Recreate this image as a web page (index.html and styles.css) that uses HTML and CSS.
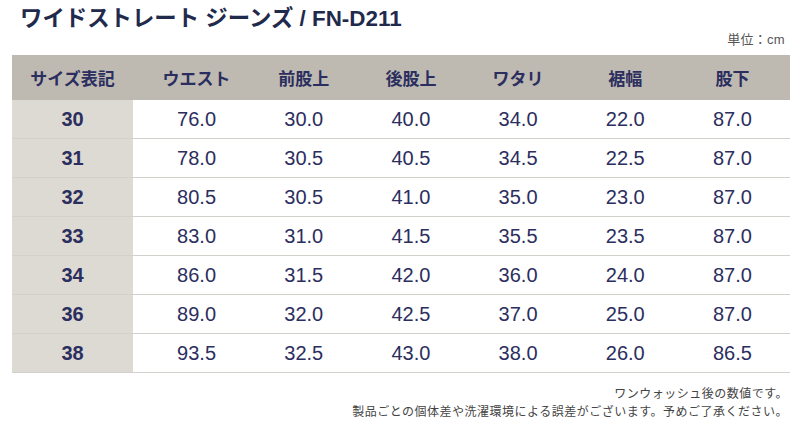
FILE: index.html
```html
<!DOCTYPE html>
<html lang="ja">
<head>
<meta charset="utf-8">
<title>ワイドストレート ジーンズ / FN-D211</title>
<link rel="stylesheet" href="styles.css">
</head>
<body>
<div class="page">
  <h1 class="title">ワイドストレート ジーンズ / FN-D211</h1>
  <div class="unit">単位：cm</div>
  <div class="table">
    <div class="row head">
      <div class="key">サイズ表記</div>
      <div>ウエスト</div><div>前股上</div><div>後股上</div><div>ワタリ</div><div>裾幅</div><div>股下</div>
    </div>
    <div class="row"><div class="key">30</div><div>76.0</div><div>30.0</div><div>40.0</div><div>34.0</div><div>22.0</div><div>87.0</div></div>
    <div class="row"><div class="key">31</div><div>78.0</div><div>30.5</div><div>40.5</div><div>34.5</div><div>22.5</div><div>87.0</div></div>
    <div class="row"><div class="key">32</div><div>80.5</div><div>30.5</div><div>41.0</div><div>35.0</div><div>23.0</div><div>87.0</div></div>
    <div class="row"><div class="key">33</div><div>83.0</div><div>31.0</div><div>41.5</div><div>35.5</div><div>23.5</div><div>87.0</div></div>
    <div class="row"><div class="key">34</div><div>86.0</div><div>31.5</div><div>42.0</div><div>36.0</div><div>24.0</div><div>87.0</div></div>
    <div class="row"><div class="key">36</div><div>89.0</div><div>32.0</div><div>42.5</div><div>37.0</div><div>25.0</div><div>87.0</div></div>
    <div class="row"><div class="key">38</div><div>93.5</div><div>32.5</div><div>43.0</div><div>38.0</div><div>26.0</div><div>86.5</div></div>
  </div>
  <div class="notes">
    <p>ワンウォッシュ後の数値です。</p>
    <p>製品ごとの個体差や洗濯環境による誤差がございます。予めご了承ください。</p>
  </div>
</div>
</body>
</html>
```
FILE: styles.css
```css
html, body {
  margin: 0;
  padding: 0;
  background: #ffffff;
}
body {
  font-family: "Liberation Sans", "Noto Sans CJK JP", sans-serif;
  color: #2b2e5e;
}
.page {
  padding: 5px 10px 0 12px;
  display: flex;
  flex-direction: column;
}
.title {
  margin: 0;
  padding-left: 8px;
  font-size: 22.4px;
  line-height: 27px;
  font-weight: 700;
  color: #1f2a4d;
}
.unit {
  text-align: right;
  padding-right: 5px;
  font-size: 13px;
  line-height: 16px;
  letter-spacing: 0.3px;
  color: #555555;
  margin-bottom: 7px;
}
.table {
  display: flex;
  flex-direction: column;
}
.row {
  display: grid;
  grid-template-columns: 131px repeat(6, 1fr);
  padding-right: 4px;
  height: 38px;
  border-bottom: 1px solid #d3d1cc;
  font-size: 20px;
  align-items: stretch;
}
.row > div {
  display: flex;
  align-items: center;
  justify-content: center;
}
.row .key {
  margin-right: 10px;
  background: #dddad3;
  font-weight: 700;
}
.row.head {
  height: 45px;
  background: #bebab2;
  border-bottom: none;
  font-size: 17px;
  font-weight: 700;
}
.row.head .key {
  background: transparent;
}
.notes {
  margin-top: 12px;
  padding-right: 2px;
  text-align: right;
  font-size: 12px;
  line-height: 18px;
  letter-spacing: 0.5px;
  color: #444444;
}
.notes p {
  margin: 0;
}
```
